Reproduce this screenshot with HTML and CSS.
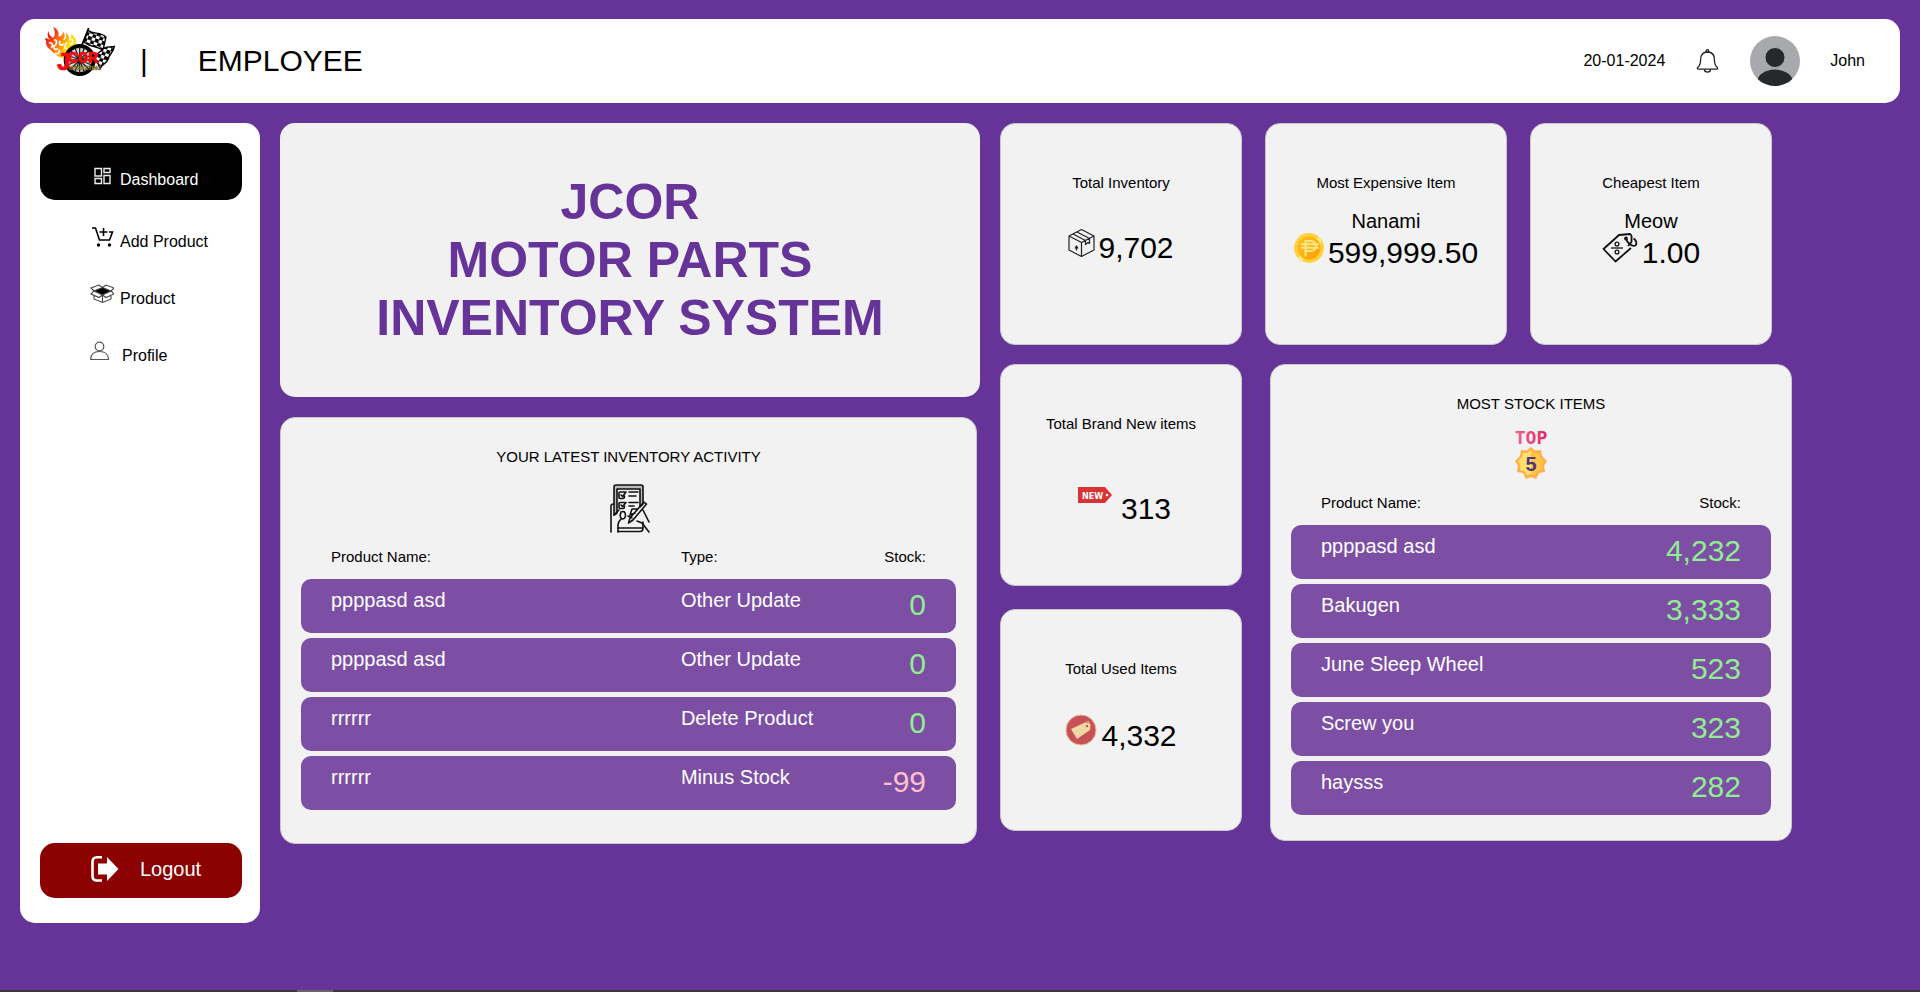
FILE: index.html
```html
<!DOCTYPE html>
<html lang="en">
<head>
<meta charset="utf-8">
<meta name="viewport" content="width=device-width, initial-scale=1">
<title>JCOR Motor Parts Inventory System</title>
<link rel="stylesheet" href="styles.css">
</head>
<body>
<div class="page">
  <header class="topbar">
    <svg class="logo" viewBox="0 0 210 150" role="img" aria-label="JCOR Marketing">
      <defs>
        <linearGradient id="flame" x1="0" y1="0" x2="1" y2="0.5">
          <stop offset="0.2" stop-color="#f01a10"/>
          <stop offset="0.55" stop-color="#ff7a10"/>
          <stop offset="0.85" stop-color="#ffe000"/>
        </linearGradient>
        <pattern id="checks" width="22" height="20" patternUnits="userSpaceOnUse" patternTransform="rotate(20)">
          <rect width="22" height="20" fill="#fff"/>
          <rect width="12" height="11"/>
          <rect x="11" y="10" width="11" height="10"/>
        </pattern>
      </defs>
      <path fill="url(#flame)" d="M48 92C30 84 22 74 14 66C4 60 2 50 4 42C0 38 0 36 2 32L14 38C8 30 6 22 10 12C12 24 18 30 26 32C32 22 30 10 24 0C38 6 44 16 40 28C46 30 52 24 56 14C62 26 58 34 54 40C62 40 66 30 62 18C74 26 74 34 70 42C80 40 80 30 78 22C92 30 96 40 92 54L66 92Z"/>
      <g fill="none" stroke="#fff" stroke-width="5">
        <path d="M12 48C22 44 26 58 18 62M28 38C38 40 36 52 28 56C24 66 34 72 38 64M46 42C40 50 48 60 56 50M66 46C56 56 58 66 66 64M80 36C88 46 80 54 74 50M30 78C40 84 46 74 42 68"/>
      </g>
      <path d="M131 3L110 56" stroke="#000" stroke-width="5"/>
      <path fill="url(#checks)" stroke="#000" stroke-width="4" d="M129 10C146 24 164 12 183 30L174 70C158 56 140 64 117 46Z"/>
      <path fill="url(#checks)" stroke="#000" stroke-width="4" d="M170 70C180 56 196 62 208 58C206 78 192 80 190 96C184 112 172 110 166 124L148 88Z"/>
      <circle cx="104" cy="99" r="42" fill="#ddd" stroke="#000" stroke-width="12"/>
      <g stroke="#222" stroke-width="4">
        <path d="M104 60V138M65 99H143M77 71L131 127M131 71L77 127M90 63L118 135M118 63L90 135M68 84L140 114M140 84L68 114"/>
      </g>
      <text class="logo-name"><tspan x="33" y="128" font-size="78">J</tspan><tspan x="69" y="109" font-size="50">COR</tspan><tspan class="logo-sub" x="72" y="129" font-size="16">MARKETING</tspan></text>
    </svg>
    <span class="heading" aria-hidden="true">|</span>
    <h1 class="heading role">EMPLOYEE</h1>
    <div class="account">
      <time datetime="2024-01-20">20-01-2024</time>
      <svg class="bell" viewBox="0 0 25 25" role="img" aria-label="Notifications" fill="none" stroke="#222" stroke-width="1.3">
        <circle cx="12.500" cy="2" r="1.300"/>
        <path d="M12.500 3C7.500 3 5.600 6.500 5.600 10.500C5.600 15.500 4.600 17 2.600 18.500Q1.800 20 3.400 20.200H21.600Q23.200 20 22.400 18.500C20.400 17 19.400 15.500 19.400 10.500C19.400 6.500 17.500 3 12.500 3Z"/>
        <path d="M9.400 20.400C9.600 24 15.400 24 15.600 20.400"/>
      </svg>
      <svg class="avatar" viewBox="0 0 50 50" role="img" aria-label="User picture">
        <clipPath id="disc"><circle cx="25" cy="25" r="25"/></clipPath>
        <g clip-path="url(#disc)">
          <rect width="50" height="50" fill="#a7a9ac"/>
          <ellipse cx="25" cy="45.500" rx="17.500" ry="12" fill="#25292c"/>
          <circle cx="25" cy="21.500" r="10" fill="#25292c" stroke="#a7a9ac"/>
        </g>
      </svg>
      <span>John</span>
    </div>
  </header>

  <div class="layout">
    <aside class="sidebar">
      <nav class="menu" aria-label="Main">
        <a class="menu-item is-active" href="#dashboard">
          <svg class="menu-icon" viewBox="0 0 24 24" fill="none" stroke="#eee" stroke-width="1.400"><path d="M5 5.500H11.500V13H5ZM14 5.500H20V9.500H14ZM5 15.500H11.500V20.500H5ZM14 12.500H20V20.500H14Z"/></svg>
          <span>Dashboard</span>
        </a>
        <a class="menu-item" href="#add-product">
          <svg class="menu-icon" viewBox="0 0 24 24" fill="none" stroke="#000" stroke-width="1.600"><path d="M2 3H5.500L9.500 15H19.500L22.500 7H19M13.500 3V11M9.500 7H17.500"/><circle cx="8.500" cy="20" r="1.700" fill="#000" stroke="none"/><circle cx="19.500" cy="20" r="1.700" fill="#000" stroke="none"/></svg>
          <span>Add Product</span>
        </a>
        <a class="menu-item" href="#product">
          <svg class="menu-icon" viewBox="0 0 24 24" fill="none" stroke="#444" stroke-width="1.100"><path fill="#000" d="M4 9L12.500 5.500L21 9L12.500 13Z"/><path d="M4 9L1 6L9 3L12.500 5.500L16 3L24 6L21 9L24 12L16 15.500L12.500 13L9 15.500L1 12ZM4 14V17L12.500 20.500L21 17V14M12.500 13V20.500"/></svg>
          <span>Product</span>
        </a>
        <a class="menu-item" href="#profile">
          <svg class="menu-icon" viewBox="0 0 24 24" fill="none" stroke="#555" stroke-width="1.200"><circle cx="9.500" cy="7.500" r="4.300"/><path d="M.7 20.500C.7 15.500 4 12.500 9.500 12.500S18.500 15.500 18.500 20.500Z"/></svg>
          <span class="menu-wide">Profile</span>
        </a>
      </nav>
      <button class="logout" type="button">
        <svg class="logout-icon" viewBox="0 0 30 28" fill="none" stroke="#fff" stroke-width="2.600"><path d="M12 2.300H7Q2.500 2.300 2.500 7V21Q2.500 25.500 7 25.500H12"/><path fill="#fff" stroke="none" d="M8 8.500H17V2L28.500 14L17 26V19.500H8Z"/></svg>
        <span>Logout</span>
      </button>
    </aside>

    <main class="left">
      <section class="hero">
        <h2 class="hero-title">JCOR<br>MOTOR PARTS<br>INVENTORY SYSTEM</h2>
      </section>

      <section class="panel activity">
        <h3 class="label">YOUR LATEST INVENTORY ACTIVITY</h3>
        <svg class="panel-icon" viewBox="0 0 50 50" fill="none" stroke="#111" stroke-width="1.600" stroke-linejoin="round" stroke-linecap="round">
          <path fill="#bbb" d="M12 30L10 31V3Q10 1 12 1H37Q39 1 39 3V20L36 23V5H13V29Z"/>
          <path d="M14 44H39M14 47.500H36Q39 47.500 39 44V38"/>
          <path d="M21 8H16Q15 8 15 9V13Q15 14.500 16 14.500H19Q20.500 14.500 20.500 12M17 11L18.500 12.500L22 8M21 18.500H16Q15 18.500 15 19.500V23Q15 24.500 16 24.500H19Q20.500 24.500 20.500 22M17 21L18.500 22.500L22 18.500M25 8H34M25 12H32M25 18.500H34M25 22H30"/>
          <path d="M7 48V22Q7 20 9.500 20M14 48V41Q14 38 17 35M10 31L15 26M17 28Q21 26 21.500 31Q21.500 35 18 35Q15 33 17 28"/>
          <path d="M40 18L42.500 20L29 36L24.500 39L26 34ZM34 25H28L26 31L31 29M24 32L28 34M39 26L45 38M33 37L38 39L45 48"/>
        </svg>
        <table class="records three">
          <thead><tr><th scope="col">Product Name:</th><th scope="col">Type:</th><th scope="col" class="stock">Stock:</th></tr></thead>
          <tbody>
            <tr><td>ppppasd asd</td><td>Other Update</td><td class="stock">0</td></tr>
            <tr><td>ppppasd asd</td><td>Other Update</td><td class="stock">0</td></tr>
            <tr><td>rrrrrr</td><td>Delete Product</td><td class="stock">0</td></tr>
            <tr><td>rrrrrr</td><td>Minus Stock</td><td class="stock minus">-99</td></tr>
          </tbody>
        </table>
      </section>
    </main>

    <div class="right">
      <div class="stats">
        <section class="stat">
          <h3 class="label">Total Inventory</h3>
          <p class="value">
            <svg width="30" height="30" viewBox="0 0 30 30" fill="none" stroke="#222" stroke-width="1.200" stroke-linejoin="round"><path d="M1 8L13.500 1.500L26 8V22L13.500 28.500L1 22ZM1 8L13.500 14.500L26 8M13.500 14.500V28.500M5 6L17.500 12.500M9 4L21.500 10.500V15.500L20 14.500L17.500 16.500V12.500M8.500 22.500V18M7 20.500L8.500 18L10 20.500"/></svg>
            <span>9,702</span>
          </p>
        </section>
        <section class="stat">
          <h3 class="label">Most Expensive Item</h3>
          <p class="item-name">Nanami</p>
          <p class="value spaced">
            <svg width="30" height="30" viewBox="0 0 30 30" fill="none">
              <defs><linearGradient id="gold" x1="0" y1="0" x2="1" y2="1"><stop stop-color="#ffc21f"/><stop offset="1" stop-color="#ff9d00"/></linearGradient></defs>
              <circle cx="15" cy="15" r="15" fill="#fdd23c"/>
              <path fill="#ffe97a" d="M4 25L25 4L28 8L8 28Z"/>
              <circle cx="15" cy="15" r="11.500" fill="url(#gold)"/>
              <path stroke="#ffe88a" stroke-width="2" d="M11.500 23.500V8H17A4.500 4.500 0 0 1 17 18H11.500M7 11.300H25M7 14.800H25"/>
            </svg>
            <span>599,999.50</span>
          </p>
        </section>
        <section class="stat">
          <h3 class="label">Cheapest Item</h3>
          <p class="item-name">Meow</p>
          <p class="value">
            <svg width="40" height="30" viewBox="0 0 40 30" fill="none" stroke="#111" stroke-width="1.800" stroke-linejoin="round"><path d="M29 15L13.500 28.500L1.500 16L17 2L28 1Q30 2 29.500 5V9L26 13"/><path stroke-width="1.300" d="M9 15H21"/><circle cx="15" cy="11" r="1.900" stroke-width="1.300"/><circle cx="15" cy="19" r="1.900" stroke-width="1.300"/><path d="M24 5.500C25 10 30 14 33.500 12.500C35.500 10 34 7 31.500 5.500"/><circle cx="24" cy="5.500" r="1"/></svg>
            <span>1.00</span>
          </p>
        </section>
      </div>

      <div class="lower">
        <div class="stack">
          <section class="stat">
            <h3 class="label">Total Brand New items</h3>
            <p class="value">
              <svg width="50" height="50" viewBox="0 0 50 50"><path fill="#d93434" d="M7 18H34L41 26L34 34H7Z"/><circle cx="36" cy="26" r="1.300" fill="#fff"/><text class="tag-text" x="11" y="30" font-size="9">NEW</text></svg>
              <span>313</span>
            </p>
          </section>
          <section class="stat">
            <h3 class="label">Total Used Items</h3>
            <p class="value">
              <svg width="36" height="32" viewBox="0 0 36 32"><circle cx="16" cy="16" r="15" fill="#c75157" stroke="#e3bd8b"/><path fill="#eed9a4" d="M6 15L20 8.500L25.500 10L25 16L12 25Z"/><circle cx="22" cy="12" r="1.200" fill="#c75157"/><path d="M21.500 11C19.500 7 25.500 6 23.500 10" fill="none" stroke="#eed9a4"/></svg>
              <span>4,332</span>
            </p>
          </section>
        </div>

        <section class="panel top-stock">
          <h3 class="label">MOST STOCK ITEMS</h3>
          <svg class="panel-icon" viewBox="0 0 50 50">
            <defs>
              <linearGradient id="pink"><stop stop-color="#ff5a90"/><stop offset="1" stop-color="#dc2864"/></linearGradient>
              <linearGradient id="medal"><stop offset="0.500" stop-color="#ffe26c"/><stop offset="0.500" stop-color="#ffc44a"/></linearGradient>
            </defs>
            <text class="top-text" x="25" y="14" font-size="18" text-anchor="middle" fill="url(#pink)">TOP</text>
            <path fill="#ffaf45" d="M25 17L29 20.500L35 20L36 26L41 31L38 36L39 42L33 43L30 49L25 47L20 49L17 43L11 42L12 36L9 31L14 26L15 20L21 20.500Z"/>
            <path fill="url(#medal)" d="M25 20L28.500 23L33 22.500L34 27L38 31L35.500 35.500L36 40L31.500 41L29 45.500L25 44L21 45.500L18.500 41L14 40L14.500 35.500L12 31L16 27L17 22.500L21.500 23Z"/>
            <text class="rank-text" x="25" y="41" font-size="20" text-anchor="middle">5</text>
          </svg>
          <table class="records">
            <thead><tr><th scope="col">Product Name:</th><th scope="col" class="stock">Stock:</th></tr></thead>
            <tbody>
              <tr><td>ppppasd asd</td><td class="stock">4,232</td></tr>
              <tr><td>Bakugen</td><td class="stock">3,333</td></tr>
              <tr><td>June Sleep Wheel</td><td class="stock">523</td></tr>
              <tr><td>Screw you</td><td class="stock">323</td></tr>
              <tr><td>haysss</td><td class="stock">282</td></tr>
            </tbody>
          </table>
        </section>
      </div>
    </div>
  </div>
</div>
<div class="edge"><div class="edge-mark"></div></div>
</body>
</html>
```

FILE: styles.css
```css
* {
  box-sizing: border-box;
}

body {
  display: flex;
  flex-direction: column;
  justify-content: space-between;
  min-height: 100vh;
  margin: 0;
  background: #663399;
  color: #000;
  font-family: "Liberation Sans", Arial, sans-serif;
  font-size: 16px;
  line-height: 18px;
}

h1, h2, h3, p {
  margin: 0;
  font-weight: normal;
}

svg {
  flex: none;
}

.page {
  display: flex;
  flex-direction: column;
  gap: 20px;
  padding: 19px 20px 0;
}

/* Top bar */
.topbar {
  display: flex;
  align-items: center;
  min-height: 84px;
  padding: 0 35px 0 25px;
  border-radius: 15px;
  background: #fff;
}

.logo {
  width: 70px;
  height: 50px;
  margin: 0 25px 18px 0;
}

.logo-name {
  fill: #f00d0d;
  stroke: #f00d0d;
  stroke-width: 2px;
  font-family: "Liberation Mono", monospace;
  font-weight: bold;
}

.logo-sub {
  fill: #f5e61a;
  stroke: #322;
  stroke-width: 1px;
  font-family: "Liberation Sans", sans-serif;
}

.heading {
  font-size: 30px;
  line-height: 34px;
}

.role {
  margin-left: 50px;
}

.account {
  display: flex;
  align-items: center;
  gap: 30px;
  margin-left: auto;
}

.bell {
  width: 25px;
  height: 25px;
}

.avatar {
  width: 50px;
  height: 50px;
}

/* Columns */
.layout {
  display: grid;
  grid-template-columns: 240px minmax(0, 700fr) minmax(0, 900fr);
  gap: 20px;
  align-items: start;
}

.sidebar {
  display: flex;
  flex-direction: column;
  justify-content: space-between;
  min-height: 800px;
  padding: 20px 18px 25px 20px;
  border-radius: 15px;
  background: #fff;
}

.menu-item {
  display: flex;
  gap: 6px;
  padding: 20px 0 13px 50px;
  border-radius: 15px;
  color: #000;
  text-decoration: none;
}

.menu-item span {
  padding-top: 8px;
  height: 24px;
}

.menu-item .menu-wide {
  padding-left: 2px;
}

.menu-item.is-active {
  margin-bottom: 5px;
  background: #000;
  color: #fff;
}

.menu-icon {
  width: 24px;
  height: 24px;
}

.logout {
  display: flex;
  align-items: center;
  gap: 20px;
  min-height: 55px;
  padding: 0 0 3px 50px;
  border: 0;
  border-radius: 15px;
  background: #8b0000;
  color: #fff;
  font: 20px/23px "Liberation Sans", Arial, sans-serif;
}

.logout-icon {
  width: 30px;
  height: 28px;
}

.left,
.right {
  display: flex;
  flex-direction: column;
  gap: 20px;
}

.right {
  gap: 19px;
}

.hero {
  padding: 50px 20px;
  border-radius: 15px;
  background: #f1f1f1;
  text-align: center;
}

.hero-title {
  color: #663399;
  font-size: 50px;
  font-weight: bold;
  line-height: 58px;
}

/* Cards */
.stat,
.panel {
  border: 1px solid #c8c8c8;
  border-radius: 15px;
  background: #f2f2f2;
}

.label {
  font-size: 15px;
  line-height: 17px;
  text-align: center;
}

.stats {
  display: grid;
  grid-template-columns: 242fr 242fr 242fr 105fr;
  column-gap: 23px;
}

.lower {
  display: grid;
  grid-template-columns: 242fr 522fr 80fr;
  column-gap: 28px;
  align-items: start;
}

.stack {
  display: flex;
  flex-direction: column;
  gap: 23px;
}

.stat {
  min-height: 222px;
  padding-top: 50px;
}

.value {
  display: flex;
  align-items: baseline;
  justify-content: center;
  margin-top: 37px;
  font-size: 30px;
  line-height: 34px;
}

.value.spaced {
  gap: 4px;
}

.item-name {
  margin-top: 19px;
  font-size: 20px;
  line-height: 23px;
  text-align: center;
}

.item-name + .value {
  margin-top: 0;
}

.tag-text {
  fill: #fff;
  font-family: "DejaVu Sans Condensed", sans-serif;
  font-weight: bold;
}

/* Record panels */
.panel {
  padding: 30px 20px 20px;
}

.activity {
  margin-right: 3px;
  padding-bottom: 28px;
}

.panel-icon {
  display: block;
  width: 50px;
  height: 50px;
  margin: 18px auto 9px;
}

.activity .panel-icon {
  margin-top: 19px;
}

.top-text {
  font-family: "DejaVu Sans Mono", monospace;
  font-weight: bold;
}

.rank-text {
  fill: #50357e;
  font-family: "Liberation Sans", sans-serif;
  font-weight: bold;
}

.records {
  width: 100%;
  border-spacing: 0 5px;
  table-layout: fixed;
}

.records th {
  padding: 0 0 9px;
  font-size: 15px;
  font-weight: normal;
  line-height: 17px;
  text-align: left;
}

.records td {
  padding: 10px 0;
  background: #7c4fa5;
  color: #fff;
  font-size: 20px;
  line-height: 23px;
  vertical-align: top;
}

.records th:first-child,
.records td:first-child {
  width: 70%;
  padding-left: 30px;
}

.records.three th:first-child {
  width: 58%;
}

.records .stock {
  padding-right: 30px;
  text-align: right;
}

.records td.stock {
  padding: 9px 30px 11px 0;
  color: #90ee90;
  font-size: 30px;
  line-height: 34px;
}

.records td.minus {
  color: #ffc0cb;
}

.records td:first-child {
  border-radius: 10px 0 0 10px;
}

.records td:last-child {
  border-radius: 0 10px 10px 0;
}

/* Thin strip along the bottom of the window */
.edge {
  height: 2px;
  padding-left: 297px;
  background: #383838;
}

.edge-mark {
  width: 36px;
  height: 2px;
  background: #666;
}
```
